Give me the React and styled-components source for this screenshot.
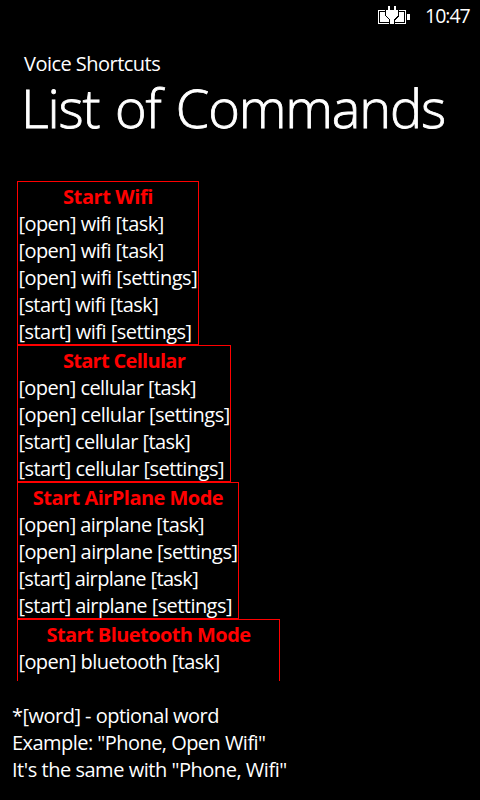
import React from 'react';
import styled, { createGlobalStyle } from 'styled-components';

const Global = createGlobalStyle`
  body { margin: 0; background: #000; }
`;
const Screen = styled.main`
  box-sizing: border-box;
  width: 480px;
  height: 800px;
  overflow: hidden;
  display: flex;
  flex-direction: column;
  background: #000;
  color: #fff;
  font: 20px/27px "Open Sans", "Noto Sans", sans-serif;
  white-space: nowrap;
`;
const StatusBar = styled.header`
  height: 32px;
  flex: none;
  display: flex;
  justify-content: flex-end;
  padding-right: 10px;
`;
const Clock = styled.time`
  width: 45px;
  line-height: 31px;
  font-size: 19.5px;
  letter-spacing: -1px;
`;
const Battery = styled.svg`
  width: 34px;
  height: 20px;
  margin: 6px 13px 0 0;
`;
const Heading = styled.div`
  padding: 18px 0 0 24px;
  height: 131px;
`;
const AppName = styled.div`
  letter-spacing: -0.53px;
`;
const Title = styled.h1`
  margin: 2px 0 0 -3px;
  font-size: 54px;
  line-height: 56px;
  font-weight: 300;
  letter-spacing: -1.15px;
  word-spacing: 2.5px;
  -webkit-text-stroke: 0.8px #fff;
`;
const List = styled.section`
  height: 500px;
  margin-left: 17px;
  overflow: hidden;
`;
const Group = styled.article`
  box-sizing: border-box;
  width: ${(p) => p.$width}px;
  height: ${(p) => p.$height}px;
  border: 1px solid #f00;
`;
const GroupTitle = styled.h2`
  margin: 0;
  font-size: 20px;
  line-height: 30px;
  height: 28px;
  text-align: center;
  font-weight: 700;
  color: #f00;
  letter-spacing: ${(p) => p.$track}px;
`;
const Command = styled.div`
  height: 27px;
  padding-left: 0.4px;
  letter-spacing: ${(p) => p.$track}px;
`;
const Notes = styled.footer`
  padding: 21px 0 0 12px;
`;
const Note = styled.div`
  letter-spacing: ${(p) => p.$track}px;
`;

const groups = [
  {
    title: 'Start Wifi', track: -0.4, width: 182, height: 164,
    lines: [
      ['[open] wifi [task]', -0.53],
      ['[open] wifi [task]', -0.53],
      ['[open] wifi [settings]', -0.48],
      ['[start] wifi [task]', -0.55],
      ['[start] wifi [settings]', -0.5],
    ],
  },
  {
    title: 'Start Cellular', track: -0.7, width: 214, height: 137,
    lines: [
      ['[open] cellular [task]', -0.57],
      ['[open] cellular [settings]', -0.51],
      ['[start] cellular [task]', -0.59],
      ['[start] cellular [settings]', -0.53],
    ],
  },
  {
    title: 'Start AirPlane Mode', track: -0.53, width: 222, height: 137,
    lines: [
      ['[open] airplane [task]', -0.6],
      ['[open] airplane [settings]', -0.55],
      ['[start] airplane [task]', -0.63],
      ['[start] airplane [settings]', -0.56],
    ],
  },
  {
    title: 'Start Bluetooth Mode', track: -0.57, width: 263, height: 137,
    lines: [['[open] bluetooth [task]', -0.55]],
  },
];

const notes = [
  ['*[word] - optional word', -0.52],
  ['Example: "Phone, Open Wifi"', -0.54],
  ['It\'s the same with "Phone, Wifi"', -0.47],
];

export default function App() {
  return (
    <Screen>
      <Global />
      <StatusBar>
        <Battery viewBox="0 0 34 20" shapeRendering="crispEdges">
          <path d="M0 4h28v14H0zM1 5v12h26V5z" fill="#fff" fillRule="evenodd" />
          <path d="M2 6h24v10H2z" fill="#fff" />
          <path d="M29 8h3v6h-3z" fill="#fff" />
          <path d="M7 3h14v7l-4 4v4h-6v-4l-4-4z" fill="#000" />
          <path d="M10 0h2v4h4V0h2v4h2v5l-3 4h-1v5h-4v-5h-1L8 9V4h2z" fill="#fff" />
        </Battery>
        <Clock>10:47</Clock>
      </StatusBar>
      <Heading>
        <AppName>Voice Shortcuts</AppName>
        <Title>List of Commands</Title>
      </Heading>
      <List>
        {groups.map((g) => (
          <Group key={g.title} $width={g.width} $height={g.height}>
            <GroupTitle $track={g.track}>{g.title}</GroupTitle>
            {g.lines.map(([text, track], i) => (
              <Command key={i} $track={track}>{text}</Command>
            ))}
          </Group>
        ))}
      </List>
      <Notes>
        {notes.map(([text, track]) => (
          <Note key={text} $track={track}>{text}</Note>
        ))}
      </Notes>
    </Screen>
  );
}
